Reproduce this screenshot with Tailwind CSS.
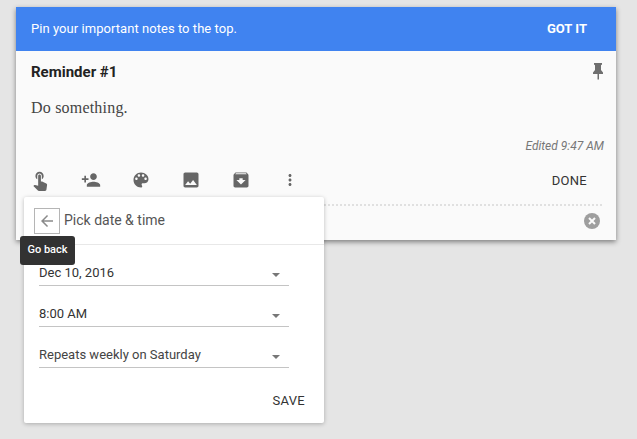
<!DOCTYPE html>
<html lang="en">

<head>
  <meta charset="UTF-8">
  <title>Reminder</title>
  <script src="https://cdn.jsdelivr.net/npm/@tailwindcss/browser@4"></script>
</head>

<body class="bg-[#e5e5e5] h-[439px] overflow-hidden font-['Roboto',sans-serif]">
  <div class="relative pt-[7px] pl-4 w-[637px] h-[439px]">
    <!-- Note card -->
    <div class="w-[600px] h-[233px] bg-[#fafafa] shadow-[0_2px_5px_rgba(0,0,0,0.45)] flex flex-col">
      <div class="h-11 shrink-0 bg-[#4083f0] text-white flex items-center justify-between pl-[15px] pr-[29px]">
        <span class="text-[13px] tracking-[0.05px] text-white">Pin your important notes to the top.</span>
        <span class="text-[13px] font-bold">GOT IT</span>
      </div>
      <div class="flex justify-between pl-[15px] pr-[10px] pt-[11px]">
        <h1 class="text-[15px] leading-5 font-bold text-[#222]">Reminder #1</h1>
        <svg class="w-4 h-[18px]" viewBox="0 0 16 18" fill="#6e6e6e"><path d="M4 1h8v1.500l-1 .8V8l2 2.500V12H9v5.500H7.500V12H3v-1.500L5 8V3.300l-1-.8z"/></svg>
      </div>
      <p class="pl-[15px] mt-[16px] text-[16px] leading-5 tracking-[0.2px] text-[#444] font-['Liberation_Serif',serif]">Do something.</p>
      <p class="pr-3 mt-[20px] text-right text-[12px] leading-4 italic text-[#777]">Edited 9:47 AM</p>
      <div class="flex items-center justify-between pl-[15px] pr-[29px] mt-[14px] h-6">
        <div class="flex items-center text-[#666]">
          <span class="w-[50px] flex -ml-[2px]"><svg class="w-[22px] h-[22px]" viewBox="0 0 24 24" fill="currentColor"><path d="M9 11.240V7.500C9 6.120 10.120 5 11.500 5S14 6.120 14 7.500v3.740c1.210-.81 2-2.180 2-3.740C16 5.010 13.990 3 11.500 3S7 5.010 7 7.500c0 1.560.79 2.930 2 3.740zm9.840 4.630l-4.540-2.260c-.17-.07-.35-.11-.54-.11H13v-6c0-.83-.67-1.500-1.500-1.500S10 6.670 10 7.500v10.740l-3.430-.72c-.08-.01-.15-.03-.24-.03-.31 0-.59.13-.79.33l-.79.8 4.940 4.940c.27.27.65.44 1.060.44h6.790c.75 0 1.330-.55 1.440-1.280l.75-5.270c.01-.07.02-.14.02-.2 0-.62-.38-1.160-.91-1.380z"/></svg></span>
          <span class="w-[50px] flex pl-[2px]"><svg class="w-5 h-5" viewBox="0 0 24 24" fill="currentColor"><path d="M15 12c2.210 0 4-1.790 4-4s-1.790-4-4-4-4 1.790-4 4 1.790 4 4 4zm-9-2V7H4v3H1v2h3v3h2v-3h3v-2H6zm9 4c-2.670 0-8 1.340-8 4v2h16v-2c0-2.660-5.330-4-8-4z"/></svg></span>
          <span class="w-[50px] flex pl-[2px]"><svg class="w-5 h-5" viewBox="0 0 24 24" fill="currentColor"><path d="M12 3c-4.970 0-9 4.030-9 9s4.030 9 9 9c.83 0 1.500-.67 1.500-1.500 0-.39-.15-.74-.39-1.010-.23-.26-.38-.61-.38-.99 0-.83.67-1.500 1.500-1.500H16c2.760 0 5-2.240 5-5 0-4.420-4.030-8-9-8zm-5.500 9c-.83 0-1.500-.67-1.500-1.500S5.670 9 6.500 9 8 9.670 8 10.500 7.330 12 6.500 12zm3-4C8.670 8 8 7.330 8 6.500S8.670 5 9.500 5s1.500.67 1.500 1.500S10.330 8 9.500 8zm5 0c-.83 0-1.500-.67-1.500-1.500S13.670 5 14.500 5s1.500.67 1.500 1.500S15.330 8 14.500 8zm3 4c-.83 0-1.500-.67-1.500-1.500S16.670 9 17.500 9s1.500.67 1.500 1.500-.67 1.500-1.500 1.500z"/></svg></span>
          <span class="w-[50px] flex pl-[2px]"><svg class="w-5 h-5" viewBox="0 0 24 24" fill="currentColor"><path d="M21 19V5c0-1.100-.9-2-2-2H5c-1.100 0-2 .9-2 2v14c0 1.100.9 2 2 2h14c1.100 0 2-.9 2-2zM8.500 13.500l2.500 3.010L14.500 12l4.500 6H5l3.500-4.500z"/></svg></span>
          <span class="w-[50px] flex pl-[2px]"><svg class="w-5 h-5" viewBox="0 0 24 24" fill="currentColor"><path d="M20.540 5.230l-1.390-1.680C18.880 3.210 18.470 3 18 3H6c-.47 0-.88.21-1.160.55L3.460 5.230C3.170 5.570 3 6.020 3 6.500V19c0 1.100.9 2 2 2h14c1.100 0 2-.9 2-2V6.500c0-.48-.17-.93-.46-1.270zM12 17.500L6.500 12H10v-2h4v2h3.500L12 17.500zM5.120 5l.81-1h12l.94 1H5.120z"/></svg></span>
          <span class="w-5 flex pl-[2px]"><svg class="w-5 h-5" viewBox="0 0 24 24" fill="currentColor"><path d="M12 8c1.100 0 2-.9 2-2s-.9-2-2-2-2 .9-2 2 .9 2 2 2zm0 2c-1.100 0-2 .9-2 2s.9 2 2 2 2-.9 2-2-.9-2-2-2zm0 6c-1.100 0-2 .9-2 2s.9 2 2 2 2-.9 2-2-.9-2-2-2z"/></svg></span>
        </div>
        <span class="text-[13px] text-[#333] tracking-[0.3px] mt-[2px]">DONE</span>
      </div>
      <div class="ml-[15px] mr-3.5 mt-[12px] border-t-2 border-dotted border-[#e0e0e0]"></div>
      <div class="flex justify-end pr-4 mt-[7px]">
        <svg class="w-4 h-4" viewBox="0 0 16 16"><circle cx="8" cy="8" r="8" fill="#9e9e9e"/><path d="M5 5l6 6M11 5l-6 6" stroke="#fafafa" stroke-width="2"/></svg>
      </div>
    </div>

    <!-- Date picker popup -->
    <div class="absolute left-6 top-[197px] w-[300px] h-[226px] bg-white rounded-[2px] shadow-[0_1px_4px_rgba(0,0,0,0.25)]">
      <div class="h-12 flex items-center pl-2.5 border-b border-[#e8e8e8]">
        <span class="w-[26px] h-[26px] border border-[#b5b5b5] flex items-center justify-center">
          <svg class="w-[18px] h-[18px]" viewBox="0 0 24 24" fill="#8a8a8a"><path d="M20 11H7.830l5.590-5.590L12 4l-8 8 8 8 1.410-1.410L7.830 13H20v-2z"/></svg>
        </span>
        <span class="ml-1 text-[14px] text-[#555]">Pick date &amp; time</span>
      </div>
      <div class="pl-[15px] w-[265px] pt-[18px] flex flex-col gap-[18px] text-[13px] text-[#333]">
        <div class="h-[23px] flex items-center justify-between border-b border-[#c4c4c4] pb-[2px]">
          <span>Dec 10, 2016</span><span class="mr-[9px] mt-[3px] border-x-[4px] border-t-[4px] border-x-transparent border-t-[#777]"></span>
        </div>
        <div class="h-[23px] flex items-center justify-between border-b border-[#c4c4c4] pb-[2px]">
          <span>8:00 AM</span><span class="mr-[9px] mt-[3px] border-x-[4px] border-t-[4px] border-x-transparent border-t-[#777]"></span>
        </div>
        <div class="h-[23px] flex items-center justify-between border-b border-[#c4c4c4] pb-[2px]">
          <span class="text-[#444]">Repeats weekly on Saturday</span><span class="mr-[9px] mt-[3px] border-x-[4px] border-t-[4px] border-x-transparent border-t-[#777]"></span>
        </div>
      </div>
      <div class="flex justify-end pr-[19px] mt-[23px]">
        <span class="text-[13px] text-[#333] tracking-[0.3px]">SAVE</span>
      </div>
    </div>

    <!-- Tooltip -->
    <div class="absolute left-5 top-[236px] w-[55px] h-[29px] bg-[#323232] rounded-[3px] text-white text-[11px] font-medium flex items-center justify-center">Go back</div>
  </div>
</body>

</html>
